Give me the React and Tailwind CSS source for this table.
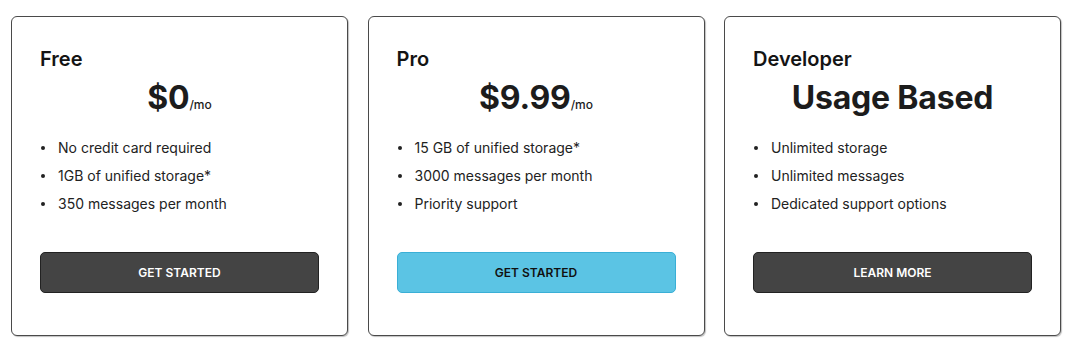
import React from 'react';

const plans = [
  {
    name: 'Free',
    price: '$0',
    unit: '/mo',
    features: ['No credit card required', '1GB of unified storage*', '350 messages per month'],
    cta: 'GET STARTED',
    primary: false,
  },
  {
    name: 'Pro',
    price: '$9.99',
    unit: '/mo',
    features: ['15 GB of unified storage*', '3000 messages per month', 'Priority support'],
    cta: 'GET STARTED',
    primary: true,
  },
  {
    name: 'Developer',
    price: 'Usage Based',
    unit: null,
    features: ['Unlimited storage', 'Unlimited messages', 'Dedicated support options'],
    cta: 'LEARN MORE',
    primary: false,
  },
];

const PlanCard = ({ plan }) => {
  return (
    <div className="flex flex-col rounded-md border border-[#4a4a4a] bg-white px-7 pt-7 pb-[42px] shadow-[1px_1px_1px_rgba(0,0,0,0.25)]">
      {/* Header */}
      <h2 className="text-[20px] leading-7 font-semibold text-[#141414]">{plan.name}</h2>
      <div className="mt-[5px] flex items-baseline justify-center text-[#1c1c1c]">
        <span className="text-[32px] leading-10 font-bold tracking-[-0.2px]">{plan.price}</span>
        {plan.unit && <span className="text-[12px] font-medium">{plan.unit}</span>}
      </div>

      {/* Features */}
      <ul className="mt-[16px] text-[14px] leading-7 text-[#222]">
        {plan.features.map((f) => (
          <li key={f} className="flex items-center">
            <span className="ml-[1px] mr-[13px] h-[4px] w-[4px] rounded-full bg-[#222]" />
            {f}
          </li>
        ))}
      </ul>

      {/* CTA */}
      <button
        className={
          plan.primary
            ? 'mt-[34px] h-[41px] w-full rounded-[5px] border border-[#3aafd6] bg-[#5bc4e4] text-[12px] font-semibold text-[#111]'
            : 'mt-[34px] h-[41px] w-full rounded-[5px] border border-[#222] bg-[#444444] text-[12px] font-semibold text-white'
        }
      >
        {plan.cta}
      </button>
    </div>
  );
};

export default function App() {
  return (
    <div
      className="min-h-[348px] w-full bg-white pl-[11px] pr-[9px] pt-4"
      style={{ fontFamily: 'Inter, "Noto Sans", sans-serif' }}
    >
      <div className="grid grid-cols-3 gap-[19.5px]">
        {plans.map((p) => (
          <PlanCard key={p.name} plan={p} />
        ))}
      </div>
    </div>
  );
}
